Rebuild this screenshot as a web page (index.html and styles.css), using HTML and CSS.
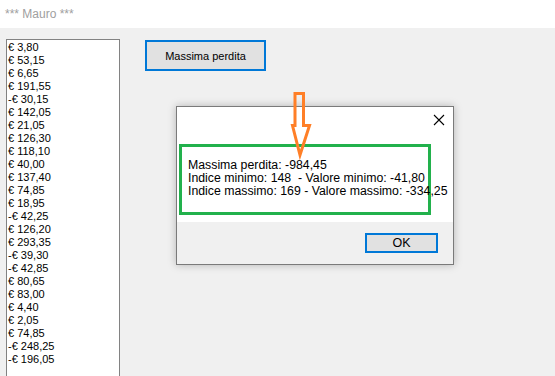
FILE: index.html
```html
<!DOCTYPE html>
<html lang="it">
<head>
<meta charset="UTF-8" />
<title>Mauro</title>
<link rel="stylesheet" href="styles.css">
</head>
<body>
  <div class="titlebar">*** Mauro ***</div>

  <div class="form">
    <div class="listbox">
      <div>€ 3,80</div>
      <div>€ 53,15</div>
      <div>€ 6,65</div>
      <div>€ 191,55</div>
      <div>-€ 30,15</div>
      <div>€ 142,05</div>
      <div>€ 21,05</div>
      <div>€ 126,30</div>
      <div>€ 118,10</div>
      <div>€ 40,00</div>
      <div>€ 137,40</div>
      <div>€ 74,85</div>
      <div>€ 18,95</div>
      <div>-€ 42,25</div>
      <div>€ 126,20</div>
      <div>€ 293,35</div>
      <div>-€ 39,30</div>
      <div>-€ 42,85</div>
      <div>€ 80,65</div>
      <div>€ 83,00</div>
      <div>€ 4,40</div>
      <div>€ 2,05</div>
      <div>€ 74,85</div>
      <div>-€ 248,25</div>
      <div>-€ 196,05</div>
    </div>
    <button class="btn-main">Massima perdita</button>
  </div>

  <!-- message box -->
  <div class="msgbox">
    <div class="msg-body">
      <div class="msg-close">
        <svg width="12" height="12" viewBox="0 0 12 12"><path d="M1 1 L11 11 M11 1 L1 11" stroke="#000" stroke-width="1.1" fill="none"/></svg>
      </div>
      <div class="msg-text">
        <div>Massima perdita: -984,45</div>
        <div>Indice minimo: 148&nbsp; - Valore minimo: -41,80</div>
        <div>Indice massimo: 169 - Valore massimo: -334,25</div>
      </div>
    </div>
    <div class="msg-foot">
      <button class="btn-ok">OK</button>
    </div>
  </div>

  <svg class="arrow" width="24" height="70" viewBox="0 0 24 70">
    <polygon points="7,3.5 15.5,3.5 15.5,35.5 21.5,35.5 12,65 4.5,35.5 7,35.5" fill="none" stroke="#ff7f27" stroke-width="3" stroke-linejoin="miter"/>
  </svg>
</body>
</html>
```

FILE: styles.css
```css
html, body { height: 376px; overflow: hidden; }
body { margin: 0; background: #f0f0f0; font-family: "Liberation Sans", Arial, sans-serif; }

.titlebar { height: 28px; background: #fff; color: #a0a0a0; font-family: "Liberation Sans", Arial, sans-serif; font-size: 12px; line-height: 28px; padding-left: 5px; box-sizing: border-box; }

.form { display: flex; align-items: flex-start; padding: 11px 0 0 6px; gap: 25px; }

.listbox { width: 114px; height: 337px; box-sizing: border-box; border: 1px solid #828282; border-bottom: none; background: #fff; padding: 1px 0 0 1px; font-size: 11px; line-height: 13px; color: #000; }

.btn-main { margin-top: 1px; width: 121px; height: 31px; background: #e1e1e1; border: 2px solid #0078d7; font-family: "Liberation Sans", Arial, sans-serif; font-size: 11px; color: #000; padding: 0; }

.msgbox { position: absolute; left: 176px; top: 106px; width: 278px; height: 159px; box-sizing: border-box; border: 1px solid #7a7a7a; background: #f0f0f0; box-shadow: 0 0 8px rgba(0,0,0,.25); font-family: "Liberation Sans", Arial, sans-serif; font-size: 11px; color: #000; }

.msg-body { background: #fff; height: 115px; box-sizing: border-box; padding: 7px 0 0 2px; }
.msg-close { display: flex; justify-content: flex-end; padding-right: 8px; height: 30px; }
.msg-text { width: 252px; height: 71px; box-sizing: border-box; border: 3px solid #22b14c; padding: 12px 0 0 6px; line-height: 13px; white-space: nowrap; font-size: 12.3px; }

.msg-foot { display: flex; justify-content: flex-end; padding: 11px 15px 0 0; }
.btn-ok { width: 73px; height: 20px; background: #e1e1e1; border: 2px solid #0078d7; font-family: "Liberation Sans", Arial, sans-serif; font-size: 12.5px; color: #000; padding: 0; }

.arrow { position: absolute; left: 288px; top: 90px; }
```
